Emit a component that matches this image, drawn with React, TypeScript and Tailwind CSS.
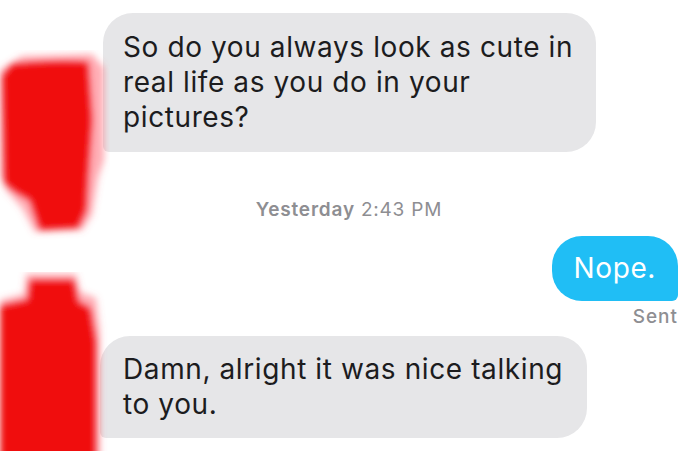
import React from "react";

function Scribble({ className, variant }: { className: string; variant: 1 | 2 }) {
  const id = `blur-${variant}`;
  return (
    <svg className={className} viewBox="0 0 110 190" width="110" height="190">
      <defs>
        <filter id={id} x="-30%" y="-30%" width="160%" height="160%">
          <feGaussianBlur stdDeviation="3.5" />
        </filter>
      </defs>
      {variant === 1 ? (
        <g filter={`url(#${id})`}>
          <path d="M22 6 L92 4 L104 18 L104 110 L98 128 L92 165 L82 180 L35 182 L22 158 L6 140 L0 125 L0 20 Z" fill="#ff5a68" opacity="0.5" />
          <path d="M12 14 Q50 10 88 12 L92 70 L88 125 L86 160 L78 178 L40 180 L30 150 Q10 140 4 132 L2 26 Z" fill="#f00a10" />
        </g>
      ) : (
        <g filter={`url(#${id})`}>
          <path d="M26 2 L76 2 L80 20 L96 26 L100 60 L100 190 L0 190 L0 28 L24 22 Z" fill="#ff5a68" opacity="0.5" />
          <path d="M30 8 L74 8 L78 30 L90 36 L96 70 L96 190 L0 190 L0 34 L28 28 Z" fill="#f00a10" />
        </g>
      )}
    </svg>
  );
}

export default function App() {
  return (
    <div
      className="relative w-[700px] h-[451px] overflow-hidden bg-white"
      style={{ fontFamily: "Inter, 'Liberation Sans', sans-serif" }}
    >
      <div className="flex flex-col pt-[13px]">
        {/* incoming bubble */}
        <div className="ml-[103px] w-[493px] rounded-[30px] rounded-bl-[6px] bg-[#e6e6e8] px-[20px] py-[17px] text-[28px] leading-[35px] tracking-[0.6px] text-[#1c1c1e]">
          So do you always look as cute in
          <br />
          real life as you do in your
          <br />
          pictures?
        </div>

        {/* timestamp */}
        <div className="mt-[46px] flex justify-center pr-[2px] text-[19px] leading-[24px] tracking-[0.8px] text-[#8e8e92]">
          <span className="font-semibold">Yesterday</span>
          <span className="ml-[6px]">2:43 PM</span>
        </div>

        {/* outgoing */}
        <div className="mt-[14px] flex flex-col items-end pr-[22px]">
          <div className="rounded-[30px] rounded-br-[6px] bg-[#20bef5] px-[22px] py-[15px] text-[28px] leading-[35px] tracking-[0.6px] text-white">
            Nope.
          </div>
          <div className="mt-[6px] text-[19px] leading-[20px] font-medium tracking-[1px] text-[#8e8e92]">Sent</div>
        </div>

        {/* incoming */}
        <div className="mt-[9px] ml-[100px] w-[487px] rounded-[30px] rounded-bl-[6px] bg-[#e6e6e8] px-[23px] py-[16px] text-[28px] leading-[35px] tracking-[0.6px] text-[#1c1c1e]">
          Damn, alright it was nice talking
          <br />
          to you.
        </div>
      </div>

      {/* redaction scribbles */}
      <Scribble className="absolute left-0 top-[50px]" variant={1} />
      <Scribble className="absolute left-0 top-[272px]" variant={2} />
    </div>
  );
}
